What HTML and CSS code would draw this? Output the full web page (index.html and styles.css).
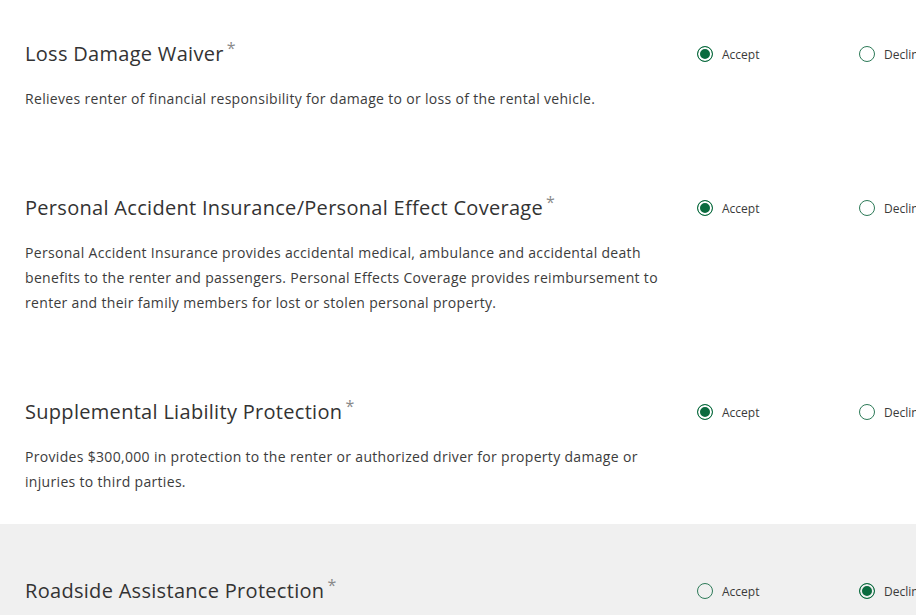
FILE: index.html
```html
<!DOCTYPE html>
<html lang="en">
<head>
<meta charset="utf-8">
<title>Protections</title>
<link rel="stylesheet" href="styles.css">
</head>
<body>
<div class="page">
  <section class="product">
    <div class="info">
      <h3 class="title">Loss Damage Waiver<span class="req">*</span></h3>
      <p class="desc">Relieves renter of financial responsibility for damage to or loss of the rental vehicle.</p>
    </div>
    <div class="options">
      <label class="option"><span class="radio checked"></span><span class="label">Accept</span></label>
      <label class="option"><span class="radio"></span><span class="label">Decline</span></label>
    </div>
  </section>
  <section class="product">
    <div class="info">
      <h3 class="title">Personal Accident Insurance/Personal Effect Coverage<span class="req">*</span></h3>
      <p class="desc">Personal Accident Insurance provides accidental medical, ambulance and accidental death benefits to the renter and passengers. Personal Effects Coverage provides reimbursement to renter and their family members for lost or stolen personal property.</p>
    </div>
    <div class="options">
      <label class="option"><span class="radio checked"></span><span class="label">Accept</span></label>
      <label class="option"><span class="radio"></span><span class="label">Decline</span></label>
    </div>
  </section>
  <section class="product">
    <div class="info">
      <h3 class="title">Supplemental Liability Protection<span class="req">*</span></h3>
      <p class="desc">Provides $300,000 in protection to the renter or authorized driver for property damage or injuries to third parties.</p>
    </div>
    <div class="options">
      <label class="option"><span class="radio checked"></span><span class="label">Accept</span></label>
      <label class="option"><span class="radio"></span><span class="label">Decline</span></label>
    </div>
  </section>
  <section class="product shaded">
    <div class="info">
      <h3 class="title">Roadside Assistance Protection<span class="req">*</span></h3>
    </div>
    <div class="options">
      <label class="option"><span class="radio"></span><span class="label">Accept</span></label>
      <label class="option"><span class="radio checked"></span><span class="label">Decline</span></label>
    </div>
  </section>
</div>
</body>
</html>
```

FILE: styles.css
```css
html, body {
  margin: 0;
  padding: 0;
  background: #ffffff;
  overflow: hidden;
}

body {
  font-family: "Open Sans", "Liberation Sans", sans-serif;
  color: #3a3a3a;
}

.page {
  width: 1100px;
}

.product {
  display: flex;
  align-items: flex-start;
  padding: 52px 0 30px 25px;
}

.product:first-child {
  padding-top: 39px;
}

.shaded {
  background: #f0f0f0;
  min-height: 200px;
}

.info {
  width: 647px;
  flex: 0 0 647px;
}

.title {
  margin: 0 0 17px;
  font-size: 20px;
  font-weight: 400;
  line-height: 30px;
  color: #333333;
  letter-spacing: 0.3px;
  white-space: nowrap;
}

.req {
  margin-left: 3px;
  font-size: 16px;
  line-height: 0;
  vertical-align: 7px;
  color: #8a8a8a;
  letter-spacing: 0;
}

.desc {
  margin: 0;
  font-size: 14px;
  line-height: 25px;
  color: #3c3c3c;
  letter-spacing: 0.32px;
}

.options {
  display: flex;
  margin-left: 25px;
  height: 30px;
  align-items: center;
}

.option {
  display: flex;
  align-items: center;
  width: 162px;
  flex: 0 0 162px;
}

.radio {
  box-sizing: border-box;
  width: 16px;
  height: 16px;
  border-radius: 50%;
  border: 1px solid #2d7a58;
  background: #ffffff;
  margin-right: 9px;
}

.radio.checked {
  border-color: #0b6b3f;
  background: #0b6b3f;
  box-shadow: inset 0 0 0 2px #ffffff;
}

.shaded .radio {
  background: transparent;
}

.shaded .radio.checked {
  background: #0b6b3f;
  box-shadow: inset 0 0 0 2px #f0f0f0;
}

.label {
  font-size: 12px;
  color: #3a3a3a;
}
```
